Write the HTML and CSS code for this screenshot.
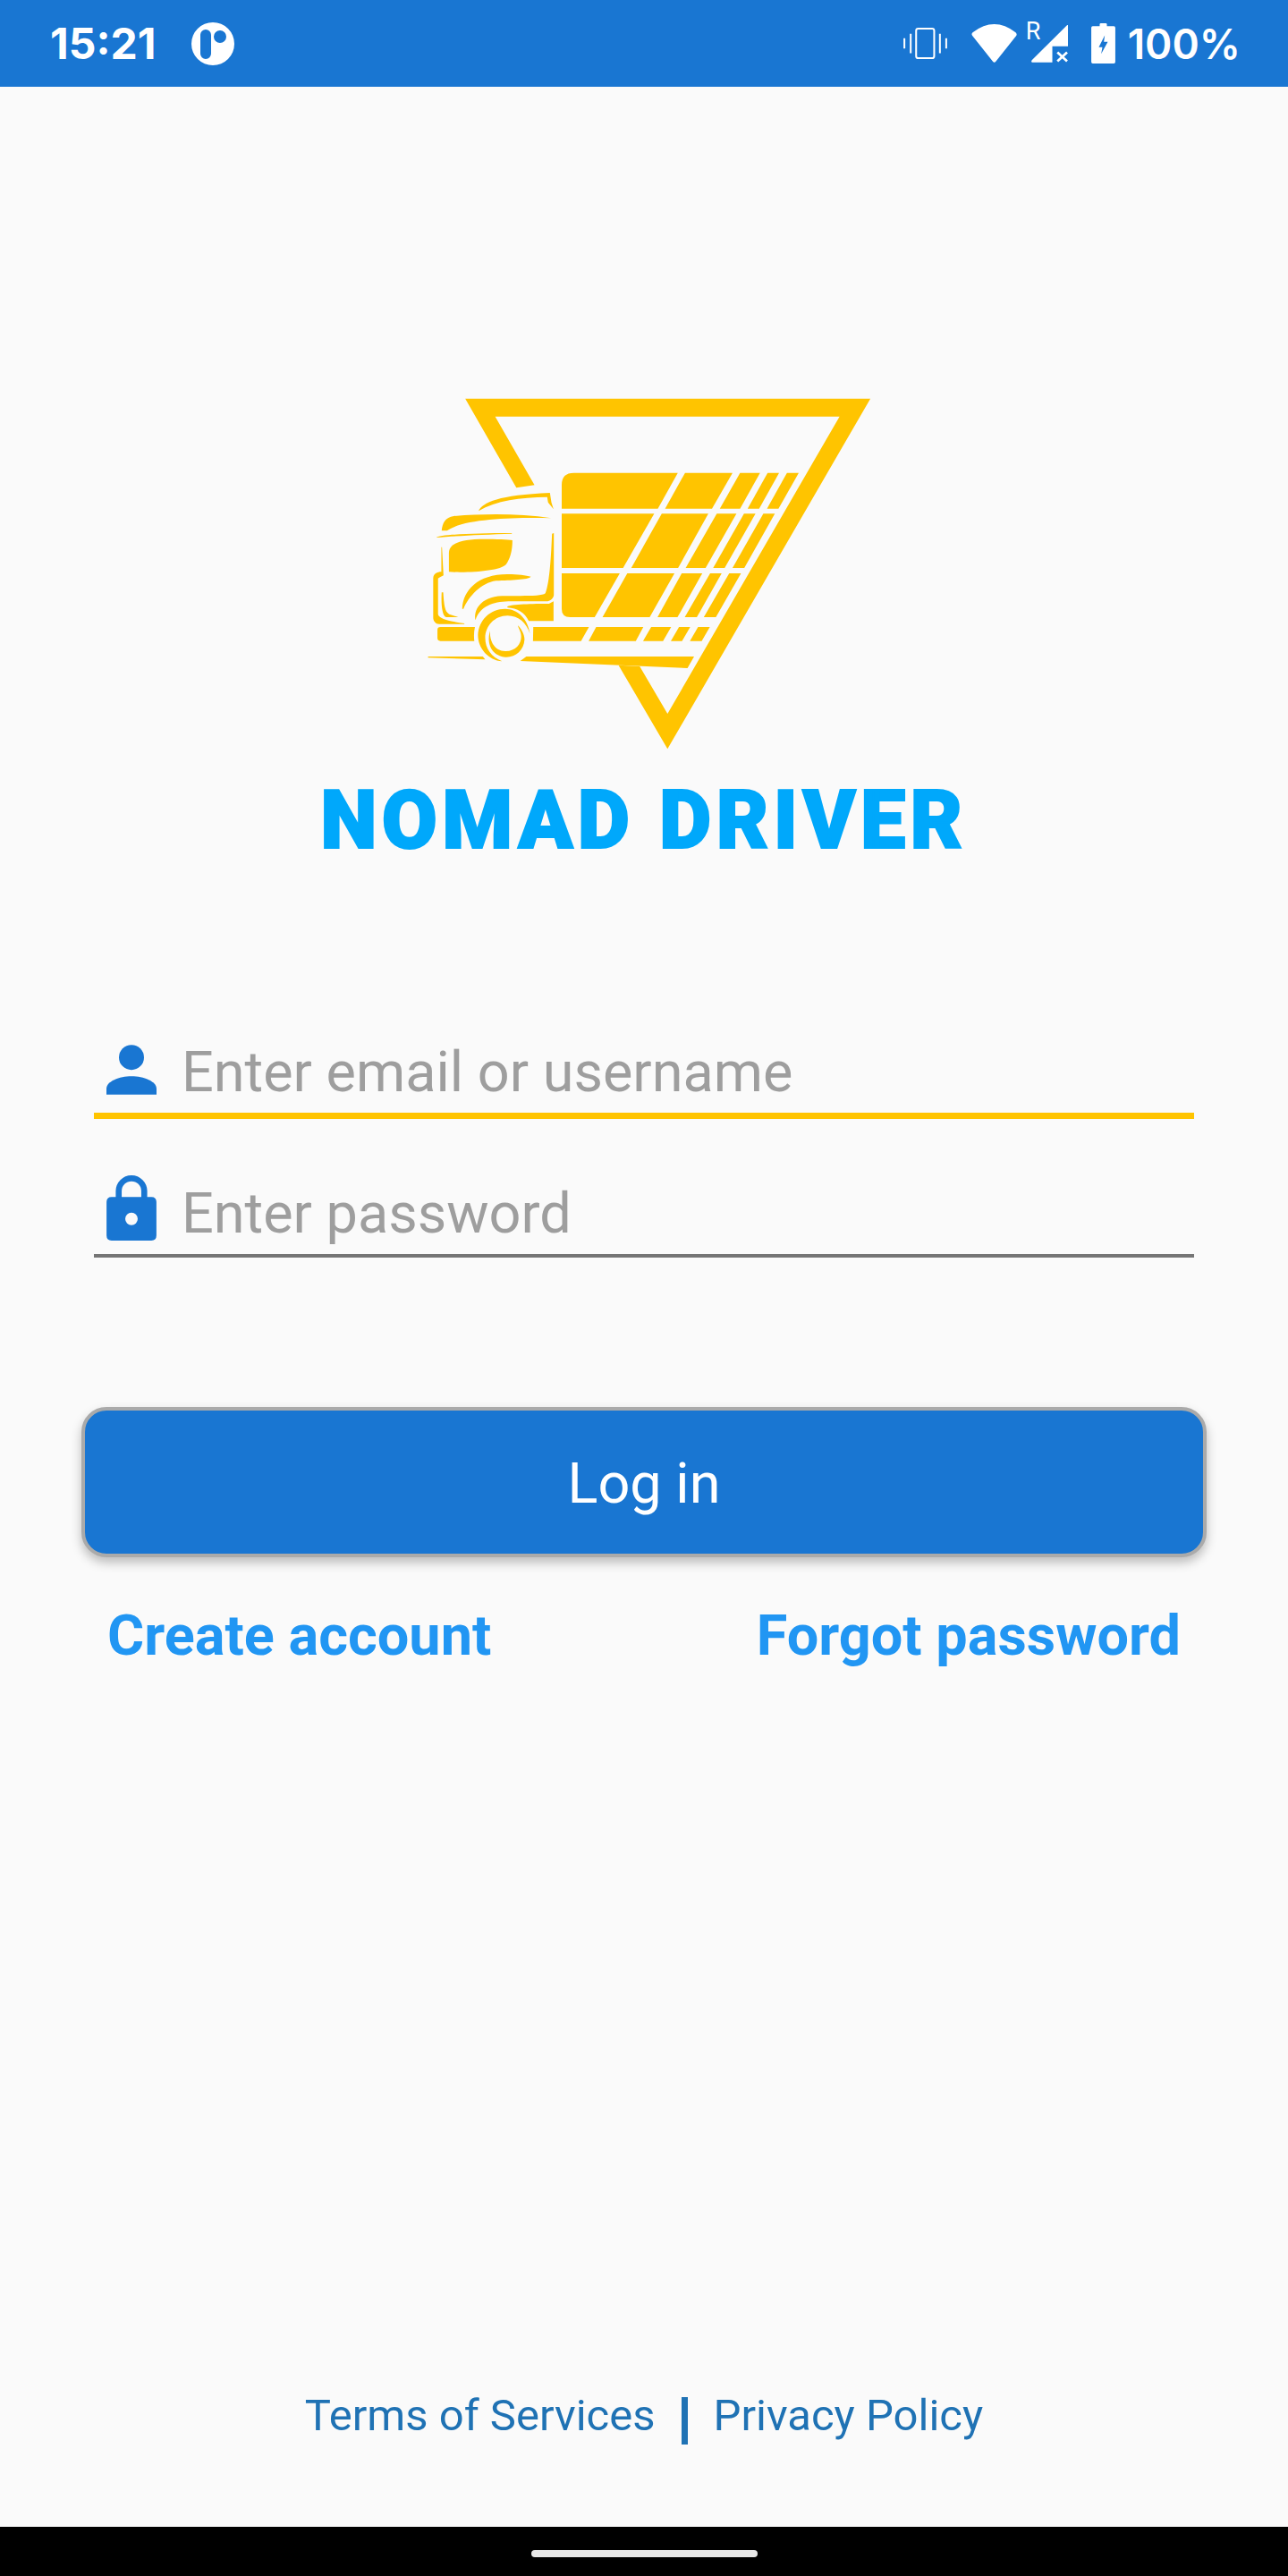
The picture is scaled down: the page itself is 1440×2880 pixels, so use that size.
FILE: index.html
```html
<!DOCTYPE html>
<html lang="en">
<head>
    <meta charset="UTF-8">
    <title>Nomad Driver</title>
    <link rel="stylesheet" href="styles.css">
</head>
<body>
    <div class="phone">
        <header class="status-bar">
            <span class="clock">15:21</span>
            <svg class="app-dot" viewBox="0 0 48 48">
                <path fill="#fff" fill-rule="evenodd" d="M24 0a24 24 0 1 1 0 48a24 24 0 0 1 0-48ZM16 8a6 6 0 0 0-6 6v21a6 6 0 0 0 12 0V14a6 6 0 0 0-6-6ZM32 9a7 7 0 1 0 0 14a7 7 0 0 0 0-14Z"/>
            </svg>
            <div class="status-icons">
                <svg class="ic-vibrate" viewBox="148 93 145 104">
                    <rect x="190" y="96" width="60" height="98" rx="7" fill="none" stroke="#fff" stroke-width="6"/>
                    <path d="M151 128V162M172 113V178M269 113V178M290 128V162" stroke="#fff" stroke-width="6"/>
                </svg>
                <svg class="ic-wifi" viewBox="375 78 153 130">
                    <path fill="#fff" d="M379 106Q452 50 524 106Q530 112 526 117L457 204Q452 210 447 204L378 117Q373 112 379 106Z"/>
                </svg>
                <span class="roaming">R</span>
                <svg class="ic-signal" viewBox="575 88 122 124">
                    <path fill="#fff" d="M697 88V158H645V212H582Q572 212 577 204L690 92Q697 85 697 88Z"/>
                    <path d="M662 178L694 208M694 178L662 208" stroke="#fff" stroke-width="8"/>
                </svg>
                <svg class="ic-battery" viewBox="775 80 80 134">
                    <path fill="#fff" fill-rule="evenodd" d="M803 90V84Q803 80 807 80H823Q827 80 827 84V90H850Q855 90 855 95V209Q855 214 850 214H780Q775 214 775 209V95Q775 90 780 90ZM820 120L800 160H812L808 182L830 142H817Z"/>
                </svg>
                <span class="percent">100%</span>
            </div>
        </header>

        <main class="login">
            <!-- logo traced from the reference -->
            <svg class="logo" viewBox="0 0 1568 1260" preserveAspectRatio="none">
                <g fill="#ffc400">
                    <path d="M178 47H1518L847 1222L685 941L755 945L847 1104L1416 107H277L407 337L347 346Z"/>
                    <path d="M537 296H881L815 416H497V336Q497 296 537 296Z"/>
                    <path d="M905 296H1062L994 416H839Z"/>
                    <path d="M1087 296H1153L1087 416H1020Z"/>
                    <path d="M1178 296H1216L1150 416H1112Z"/>
                    <path d="M1242 296H1281L1214 416H1176Z"/>
                    <path d="M497 433H803L700 615H497Z"/>
                    <path d="M828 433H982L882 615H727Z"/>
                    <path d="M1010 433H1075L973 615H907Z"/>
                    <path d="M1100 433H1138L1036 615H998Z"/>
                    <path d="M1164 433H1202L1101 615H1062Z"/>
                    <path d="M497 633H689L606 780H525Q497 780 497 752Z"/>
                    <path d="M714 633H870L788 780H632Z"/>
                    <path d="M894 633H962L880 780H814Z"/>
                    <path d="M988 633H1026L944 780H904Z"/>
                    <path d="M1051 633H1090L1007 780H967Z"/>
                    <path d="M403 813H587L561 860H402Z"/>
                    <path d="M611 813H767L742 860H586Z"/>
                    <path d="M793 813H859L832 860H766Z"/>
                    <path d="M885 813H922L895 860H858Z"/>
                    <path d="M948 813H987L960 860H921Z"/>
                    <path d="M96 813H210Q205 836 208 860H96Q86 860 86 850V823Q86 813 96 813Z"/>
                    <path d="M55 912H236L244 922L55 916Z"/>
                    <path d="M380 912H935L913 951L360 927Z"/>
                    <path d="M222 424C235 395 290 370 458 363L463 395L470 418L452 395L449 377C360 378 280 388 222 424Z"/>
                    <path d="M100 490C102 465 112 445 140 441C240 433 360 432 462 448C340 445 170 450 118 490Z"/>
                    <path d="M82 513C90 503 200 498 332 498V500C240 503 150 507 82 513Z"/>
                    <path d="M124 565C124 530 170 518 240 518C280 518 320 519 334 522C334 560 325 585 313 603C295 625 190 632 124 628Z"/>
                    <path d="M465 500L471 498V705C471 715 460 727 445 727L320 727C270 728 225 745 212 790C205 760 225 712 300 709C360 707 430 712 443 700C458 660 462 570 465 500Z"/>
                    <path d="M168 752C170 690 220 635 320 636C350 636 380 640 395 644C385 655 330 655 280 658C230 665 190 710 172 752Z"/>
                    <path d="M99 545H101L106 640L92 647L88 650V770C90 785 130 795 175 801V803H92C80 803 72 792 72 782V650C72 635 85 628 99 628Z"/>
                    <path d="M100 697H105C108 740 110 762 125 770L155 780H115C100 775 98 730 100 697Z"/>
                    <path d="M317 744C340 735 420 735 455 735L470 727V793H388C375 765 350 750 318 748Z"/>
                    <path d="M392 835C385 785 350 752 310 752C260 752 222 790 220 840C220 885 255 925 300 928C265 915 244 885 244 850C244 810 275 775 318 775C355 775 380 800 392 835Z"/>
                    <path d="M352 808C360 815 374 835 374 855C372 890 345 915 312 914C275 912 245 880 260 825C258 860 275 895 312 894C345 893 363 870 363 845C363 830 355 820 352 808Z"/>
                </g>
            </svg>
            <h1 class="brand">NOMAD DRIVER</h1>

            <form class="login-form">
                <div class="field field-active">
                    <svg class="field-icon icon-user" viewBox="117 108 168 167">
                        <circle cx="201" cy="150" r="42" fill="#1976d2"/>
                        <path fill="#1976d2" d="M117 275V255C117 230 160 213 201 213C242 213 285 230 285 255V275Z"/>
                    </svg>
                    <span class="placeholder">Enter email or username</span>
                </div>
                <div class="field">
                    <svg class="field-icon icon-lock" viewBox="117 550 168 220">
                        <path d="M158 625V603A43 43 0 0 1 244 603V625" fill="none" stroke="#1976d2" stroke-width="20"/>
                        <path fill="#1976d2" fill-rule="evenodd" d="M134 623H268Q285 623 285 640V753Q285 770 268 770H134Q117 770 117 753V640Q117 623 134 623ZM201 676a21 21 0 1 0 0 42a21 21 0 0 0 0-42Z"/>
                    </svg>
                    <span class="placeholder">Enter password</span>
                </div>
            </form>

            <button class="login-btn" type="button">Log in</button>

            <div class="links">
                <a href="#">Create account</a>
                <a href="#">Forgot password</a>
            </div>

            <footer class="legal">
                <a href="#">Terms of Services</a>
                <span class="legal-sep"></span>
                <a href="#">Privacy Policy</a>
            </footer>
        </main>

        <div class="nav-bar">
            <div class="home-pill"></div>
        </div>
    </div>
</body>
</html>
```

FILE: styles.css
```css
/* General Styles */
* {
    box-sizing: border-box;
}

body {
    margin: 0;
    font-family: 'Roboto', sans-serif;
    background-color: #fafafa;
}

a {
    text-decoration: none;
}

.phone {
    width: 1440px;
    height: 2880px;
    display: flex;
    flex-direction: column;
    overflow: hidden;
}

/* Status bar */
.status-bar {
    height: 97px;
    flex-shrink: 0;
    display: flex;
    align-items: center;
    padding: 0 53px 0 56px;
    background-color: #1976d2;
    color: #fff;
    font-family: 'Inter', sans-serif;
    font-weight: 700;
    font-size: 48px;
    line-height: 54px;
}

.clock {
    width: 158px;
}

.app-dot {
    width: 48px;
    height: 48px;
    margin-top: 1px;
}

.status-icons {
    margin-left: auto;
    display: flex;
    align-items: center;
}

.ic-vibrate {
    width: 49px;
    height: 35px;
    margin-right: 27px;
}

.ic-wifi {
    width: 51px;
    height: 43px;
    margin-right: 10px;
}

.roaming {
    align-self: flex-start;
    width: 15px;
    margin-right: -9px;
    font-family: 'Roboto', sans-serif;
    font-size: 27px;
    font-weight: 400;
    line-height: 27px;
}

.ic-signal {
    width: 41px;
    height: 42px;
    margin-right: 26px;
}

.ic-battery {
    width: 27px;
    height: 45px;
    margin-right: 14px;
}

.percent {
    font-size: 46px;
    font-weight: 600;
}

/* Login screen */
.login {
    flex: 1;
    display: flex;
    flex-direction: column;
}

.logo {
    width: 530px;
    height: 420px;
    margin: 333px 0 0 460px;
    flex-shrink: 0;
}

.brand {
    margin: 13px 0 0;
    height: 110px;
    line-height: 110px;
    text-align: center;
    font-family: 'Roboto', sans-serif;
    font-weight: 900;
    font-size: 90px;
    letter-spacing: 5.3px;
    color: #00a8fb;
    -webkit-text-stroke: 2px #00a8fb;
}

.login-form {
    margin-top: 189px;
    padding: 0 105px;
}

.field {
    display: flex;
    align-items: flex-end;
    padding: 0 0 8px 14px;
    border-bottom: 4px solid #757575;
}

.field + .field {
    margin-top: 63px;
}

.field-active {
    padding-bottom: 8px;
    border-bottom: 7px solid #ffc400;
}

.field-icon {
    width: 56px;
    flex-shrink: 0;
}

.icon-user {
    height: 56px;
    margin-bottom: 12px;
}

.icon-lock {
    height: 73px;
    margin-bottom: 7px;
}

.placeholder {
    margin-left: 28px;
    font-size: 63px;
    line-height: 74px;
    color: #9e9e9e;
}

.login-btn {
    height: 168px;
    margin: 167px 91px 0;
    padding-top: 4px;
    border: 4px solid #aaaaaa;
    border-radius: 28px;
    background-color: #1976d2;
    color: #fff;
    font-family: 'Roboto', sans-serif;
    font-size: 63px;
    box-shadow: 0 6px 12px rgba(0, 0, 0, 0.25);
}

.links {
    margin-top: 51px;
    display: flex;
    justify-content: space-between;
    padding: 0 120px;
    font-size: 63px;
    line-height: 74px;
    font-weight: 700;
}

.links a {
    color: #2196f3;
}

.legal {
    margin-top: auto;
    padding-bottom: 92px;
    display: flex;
    justify-content: center;
    align-items: flex-start;
    gap: 29px;
    font-size: 49px;
    line-height: 57px;
}

.legal a {
    color: #1f72b4;
}

.legal-sep {
    width: 7px;
    height: 53px;
    margin-top: 8px;
    background-color: #1f72b4;
}

/* Navigation bar */
.nav-bar {
    height: 55px;
    flex-shrink: 0;
    display: flex;
    justify-content: center;
    background-color: #000;
}

.home-pill {
    width: 253px;
    height: 8px;
    margin-top: 26px;
    border-radius: 4px;
    background-color: #e8e8e8;
}
```
